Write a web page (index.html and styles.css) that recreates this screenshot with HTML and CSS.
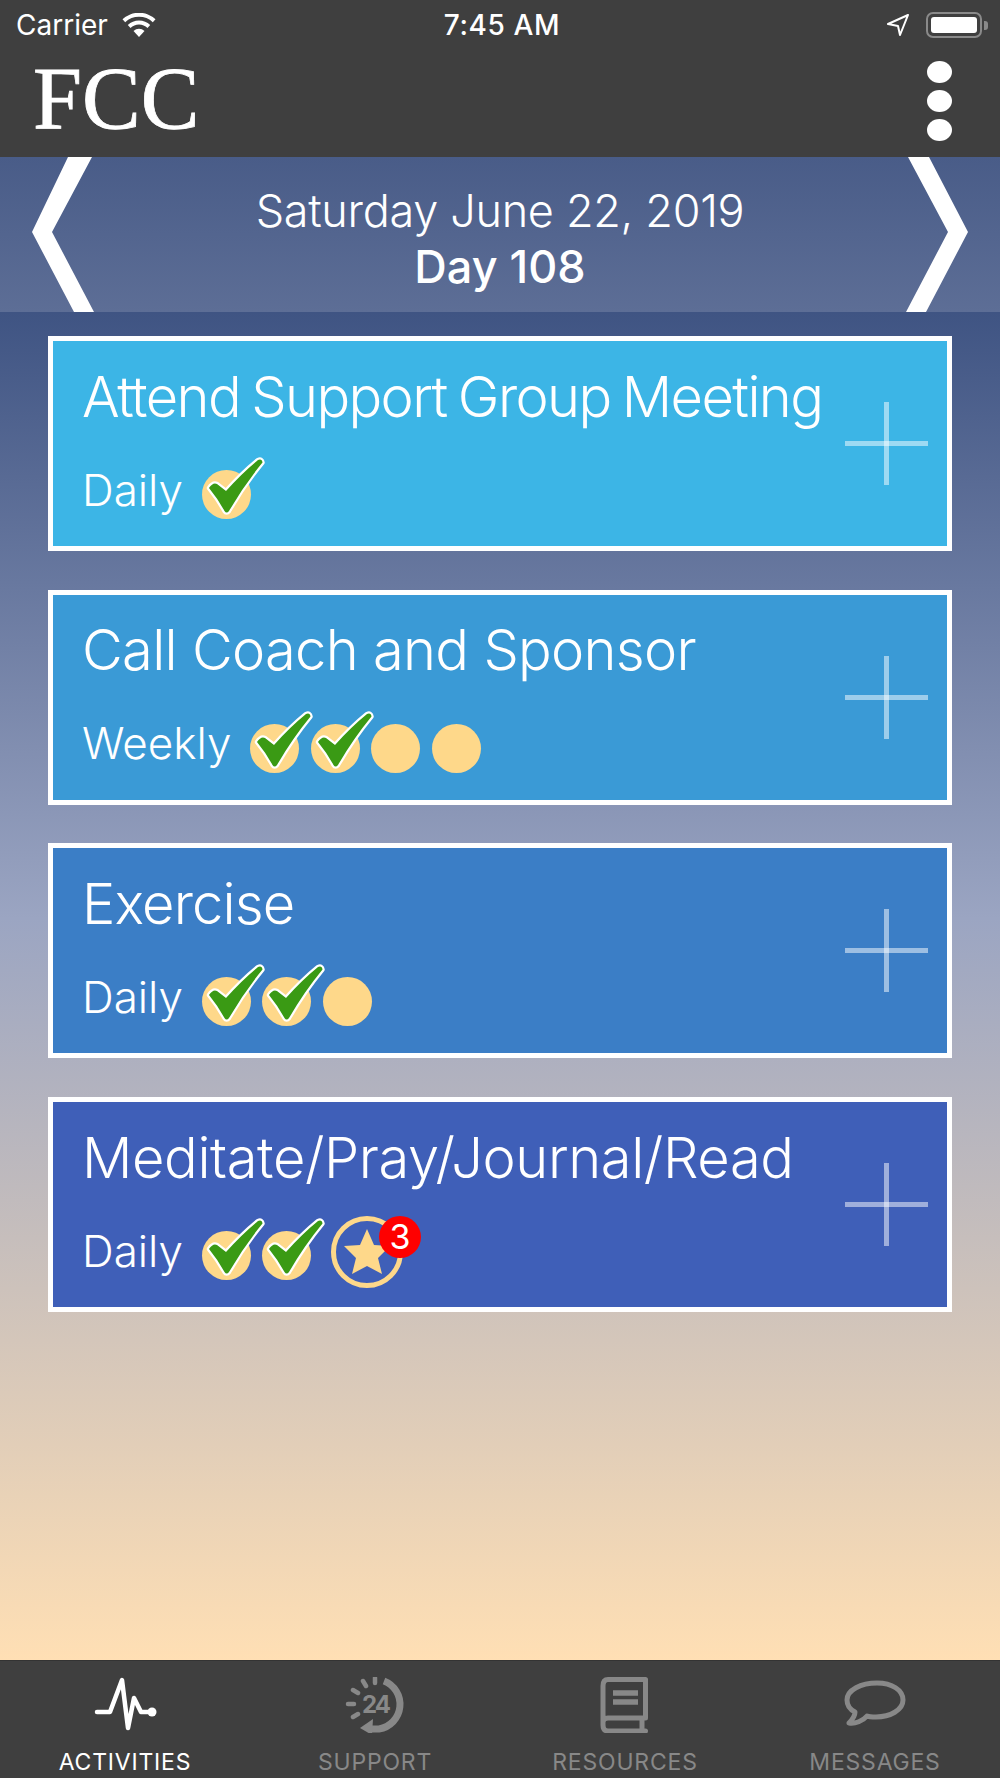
FILE: index.html
```html
<!DOCTYPE html>
<html lang="en">
<head>
    <meta charset="UTF-8">
    <meta name="viewport" content="width=device-width, initial-scale=1.0">
    <title>FCC - Activities</title>
    <link rel="stylesheet" href="styles.css">
</head>
<body>
    <svg class="defs" width="0" height="0">
        <symbol id="check" viewBox="0 -12 64 56" overflow="visible">
            <path class="check-mark" d="M7 18 Q11 12 15 14 L24 21 Q40 3 56 -10 Q60 -11.500 60.500 -7.500 Q42 15 27 41 Q24.500 44 22.500 41 Q16 29 7 18 Z"/>
        </symbol>
    </svg>

    <header class="top-bar">
        <div class="status-bar">
            <div class="status-left">
                <span>Carrier</span>
                <svg class="wifi" width="34" height="24" viewBox="0 0 34 24">
                    <path d="M17 24 L11.5 18 A8 8 0 0 1 22.500 18 Z"/>
                    <path d="M8.500 15 L5.800 12 A16 16 0 0 1 28.200 12 L25.500 15 A12 12 0 0 0 8.500 15 Z"/>
                    <path d="M3.200 9.200 L0.500 6.300 A24 24 0 0 1 33.500 6.300 L30.800 9.200 A20 20 0 0 0 3.200 9.200 Z"/>
                </svg>
            </div>
            <div class="status-time">7:45 AM</div>
            <div class="status-right">
                <svg width="24" height="24" viewBox="0 0 24 24">
                    <path class="location" d="M22 2 L2 11 L12 13 L14 22 Z"/>
                </svg>
                <div class="battery"><span class="battery-level"></span></div>
                <span class="battery-nub"></span>
            </div>
        </div>
        <div class="nav-bar">
            <div class="logo">FCC</div>
            <div class="menu-dots"><span></span><span></span><span></span></div>
        </div>
    </header>

    <section class="date-band">
        <svg class="chevron" width="62" height="155" viewBox="0 0 62 155">
            <polygon points="36,0 60,0 20,75 62,155 42,155 0,75"/>
        </svg>
        <div class="date-text">
            <div class="date-line">Saturday June 22, 2019</div>
            <div class="day-line">Day 108</div>
        </div>
        <svg class="chevron" width="62" height="155" viewBox="0 0 62 155">
            <polygon points="2,0 23,0 62,75 20,155 0,155 42,75"/>
        </svg>
    </section>

    <main class="activities">
        <article class="card card-1">
            <div class="card-body">
                <h2>Attend Support Group Meeting</h2>
                <div class="progress">
                    <span class="freq">Daily</span>
                    <span class="token"><svg><use href="#check"/></svg></span>
                </div>
            </div>
            <svg class="add" width="83" height="83" viewBox="0 0 83 83"><rect x="39" width="5" height="83"/><rect y="39" width="83" height="5"/></svg>
        </article>

        <article class="card card-2">
            <div class="card-body">
                <h2>Call Coach and Sponsor</h2>
                <div class="progress">
                    <span class="freq">Weekly</span>
                    <span class="token"><svg><use href="#check"/></svg></span>
                    <span class="token"><svg><use href="#check"/></svg></span>
                    <span class="token"></span>
                    <span class="token"></span>
                </div>
            </div>
            <svg class="add" width="83" height="83" viewBox="0 0 83 83"><rect x="39" width="5" height="83"/><rect y="39" width="83" height="5"/></svg>
        </article>

        <article class="card card-3">
            <div class="card-body">
                <h2>Exercise</h2>
                <div class="progress">
                    <span class="freq">Daily</span>
                    <span class="token"><svg><use href="#check"/></svg></span>
                    <span class="token"><svg><use href="#check"/></svg></span>
                    <span class="token"></span>
                </div>
            </div>
            <svg class="add" width="83" height="83" viewBox="0 0 83 83"><rect x="39" width="5" height="83"/><rect y="39" width="83" height="5"/></svg>
        </article>

        <article class="card card-4">
            <div class="card-body">
                <h2>Meditate/Pray/Journal/Read</h2>
                <div class="progress">
                    <span class="freq">Daily</span>
                    <span class="token"><svg><use href="#check"/></svg></span>
                    <span class="token"><svg><use href="#check"/></svg></span>
                    <span class="star-ring">
                        <svg width="48" height="46" viewBox="0 0 48 46">
                            <polygon points="24,0 31,16 47,17 35,29 39,45 24,37 9,45 13,29 1,17 17,16"/>
                        </svg>
                        <span class="badge">3</span>
                    </span>
                </div>
            </div>
            <svg class="add" width="83" height="83" viewBox="0 0 83 83"><rect x="39" width="5" height="83"/><rect y="39" width="83" height="5"/></svg>
        </article>
    </main>

    <nav class="tab-bar">
        <a class="tab active">
            <svg width="64" height="56" viewBox="0 0 64 56">
                <path class="tab-line" d="M4 35 H17 L29 3 L35 51 L41 21 L48 35 H58"/>
                <circle class="tab-fill" cx="59" cy="35" r="4.500"/>
            </svg>
            <span>ACTIVITIES</span>
        </a>
        <a class="tab">
            <svg width="64" height="56" viewBox="0 0 64 56">
                <path class="tab-line thick" d="M41 4 A25 25 0 0 1 36 52 L27 52"/>
                <polygon class="tab-fill" points="17,51 30,42 29,58"/>
                <path class="tab-line" d="M32 1 V6 M20 4 L23 9 M10 13 L15 16 M5 27 H11 M10 40 L15 37"/>
                <text class="tab-num" x="32.500" y="36" text-anchor="middle">24</text>
            </svg>
            <span>SUPPORT</span>
        </a>
        <a class="tab">
            <svg width="64" height="56" viewBox="0 0 64 56">
                <path class="tab-line medium" d="M52.500 2.500 H15 Q10 2.500 10 9 V48 Q10 54 15 54 H52.500 M10 45 Q10 41 15 41 H52.500 V2.500 M49 41 V54"/>
                <path class="tab-line bar" d="M20 16 H45 M20 25 H45"/>
            </svg>
            <span>RESOURCES</span>
        </a>
        <a class="tab">
            <svg width="64" height="56" viewBox="0 0 64 56">
                <path class="tab-line medium" d="M34 6 C49 6 60 13 60 23 C60 33 47 40 33 40 C29 40 26 40 24 39 C20 44 12 47 6 46 C9 43 12 40 12 35 C6 32 4 28 4 23 C4 13 18 6 34 6 Z"/>
            </svg>
            <span>MESSAGES</span>
        </a>
    </nav>
</body>
</html>
```

FILE: styles.css
```css
/* Reset and General Styles */
* {
    margin: 0;
    padding: 0;
    box-sizing: border-box;
}

body {
    font-family: 'Inter', 'Liberation Sans', sans-serif;
    color: white;
    display: flex;
    flex-direction: column;
    height: 1778px;
    background-color: #3f3f3f;
}

.defs {
    position: absolute;
}

/* Status bar and nav */
.top-bar {
    height: 157px;
    background-color: #3f3f3f;
}

.status-bar {
    height: 50px;
    padding: 0 12px 0 16px;
    display: grid;
    grid-template-columns: 1fr auto 1fr;
    align-items: center;
    font-size: 28px;
}

.status-left {
    display: flex;
    align-items: center;
    gap: 14px;
}

.wifi {
    fill: white;
}

.status-time {
    font-weight: 500;
    font-size: 28px;
    letter-spacing: 0.6px;
}

.status-right {
    display: flex;
    justify-content: flex-end;
    align-items: center;
}

.location {
    fill: none;
    stroke: white;
    stroke-width: 2;
    stroke-linejoin: round;
}

.battery {
    width: 56px;
    height: 26px;
    margin-left: 16px;
    padding: 3px;
    border: 2px solid #8a8a8a;
    border-radius: 7px;
}

.battery-level {
    display: block;
    height: 100%;
    background-color: white;
    border-radius: 3px;
}

.battery-nub {
    width: 4px;
    height: 9px;
    margin-left: 2px;
    background-color: #8a8a8a;
    border-radius: 0 3px 3px 0;
}

.nav-bar {
    height: 107px;
    padding: 0 48px 0 33px;
    display: flex;
    justify-content: space-between;
    align-items: center;
}

.logo {
    font-family: 'Liberation Serif', serif;
    font-size: 88px;
    line-height: 1;
    margin-top: -10px;
    -webkit-text-stroke: 0.8px white;
}

.menu-dots {
    display: flex;
    flex-direction: column;
    gap: 7px;
    margin-top: -5px;
}

.menu-dots span {
    width: 25px;
    height: 22px;
    background-color: white;
    border-radius: 50%;
}

/* Date band */
.date-band {
    height: 155px;
    padding: 0 32px;
    display: flex;
    justify-content: space-between;
    align-items: center;
    background: linear-gradient(#495c88, #5d6e96);
}

.chevron {
    fill: white;
    flex: none;
}

.date-text {
    text-align: center;
    margin-top: 8px;
}

.date-line {
    font-size: 45px;
    font-weight: 300;
    letter-spacing: -0.3px;
    line-height: 56px;
}

.day-line {
    font-size: 45px;
    font-weight: 500;
    line-height: 56px;
}

/* Activity cards */
.activities {
    flex: 1;
    padding: 24px 48px 0;
    display: flex;
    flex-direction: column;
    gap: 38.7px;
    background: linear-gradient(#3f5483, #9ba5c2 45%, #ffdfb4);
}

.card {
    height: 215px;
    border: 5px solid white;
    padding: 0 19px 0 29px;
    display: flex;
    justify-content: space-between;
    align-items: center;
}

.card-1 { background-color: #3cb5e6; }
.card-2 { background-color: #3a9ad6; }
.card-3 { background-color: #3b7ec6; }
.card-4 { background-color: #3f5fb8; }

.card-body {
    margin-top: 1px;
}

.card h2 {
    font-size: 56px;
    font-weight: 300;
    line-height: 68px;
    white-space: nowrap;
}

/* Inter runs wider than the original face, so each title is pulled in */
.card-1 h2 { letter-spacing: -1.600px; word-spacing: -3px; }
.card-2 h2 { letter-spacing: -0.700px; }
.card-3 h2 { letter-spacing: -0.850px; }
.card-4 h2 { letter-spacing: -0.400px; }

.progress {
    height: 72px;
    margin-top: 23px;
    display: flex;
    align-items: center;
    gap: 11.5px;
}

.freq {
    font-size: 44px;
    font-weight: 300;
    margin-right: 7.5px;
}

.token {
    width: 49px;
    height: 49px;
    margin-top: 10px;
    border-radius: 50%;
    background-color: #fed88a;
}

.token svg {
    width: 64px;
    height: 56px;
    margin-top: -12px;
    overflow: visible;
    display: block;
}

.check-mark {
    fill: #3a9a14;
    stroke: white;
    stroke-width: 4.500;
    stroke-linejoin: round;
    paint-order: stroke;
}

.star-ring {
    position: relative;
    width: 72px;
    height: 72px;
    margin: 3px 0 0 8px;
    border: 5px solid #fed88a;
    border-radius: 50%;
    display: flex;
    justify-content: center;
    align-items: center;
}

.star-ring svg {
    fill: #fed88a;
}

.badge {
    position: absolute;
    top: -5px;
    right: -23px;
    width: 42px;
    height: 42px;
    border-radius: 50%;
    background-color: #fe0000;
    font-size: 34px;
    font-weight: 400;
    line-height: 42px;
    text-align: center;
}

.add {
    fill: rgba(255, 255, 255, 0.5);
    flex: none;
}

/* Tab bar */
.tab-bar {
    height: 118px;
    display: grid;
    grid-template-columns: repeat(4, 1fr);
    background-color: #3f3f3f;
    border-top: 1px solid #333;
}

.tab {
    padding-top: 16px;
    display: flex;
    flex-direction: column;
    align-items: center;
    gap: 17px;
    color: #888;
    font-size: 23px;
    line-height: 24px;
    letter-spacing: 0.8px;
}

.tab.active {
    color: white;
}

.tab-line {
    fill: none;
    stroke: currentColor;
    stroke-width: 4.500;
    stroke-linecap: round;
    stroke-linejoin: round;
}

.tab-line.thick {
    stroke-width: 7;
    stroke-linecap: butt;
}

.tab-line.medium {
    stroke-width: 5;
}

.tab-line.bar {
    stroke-width: 5.500;
    stroke-linecap: butt;
}

.tab-fill {
    fill: currentColor;
}

.tab-num {
    fill: currentColor;
    font-family: 'Inter', sans-serif;
    font-size: 24px;
    font-weight: 700;
    letter-spacing: -2px;
}
```
